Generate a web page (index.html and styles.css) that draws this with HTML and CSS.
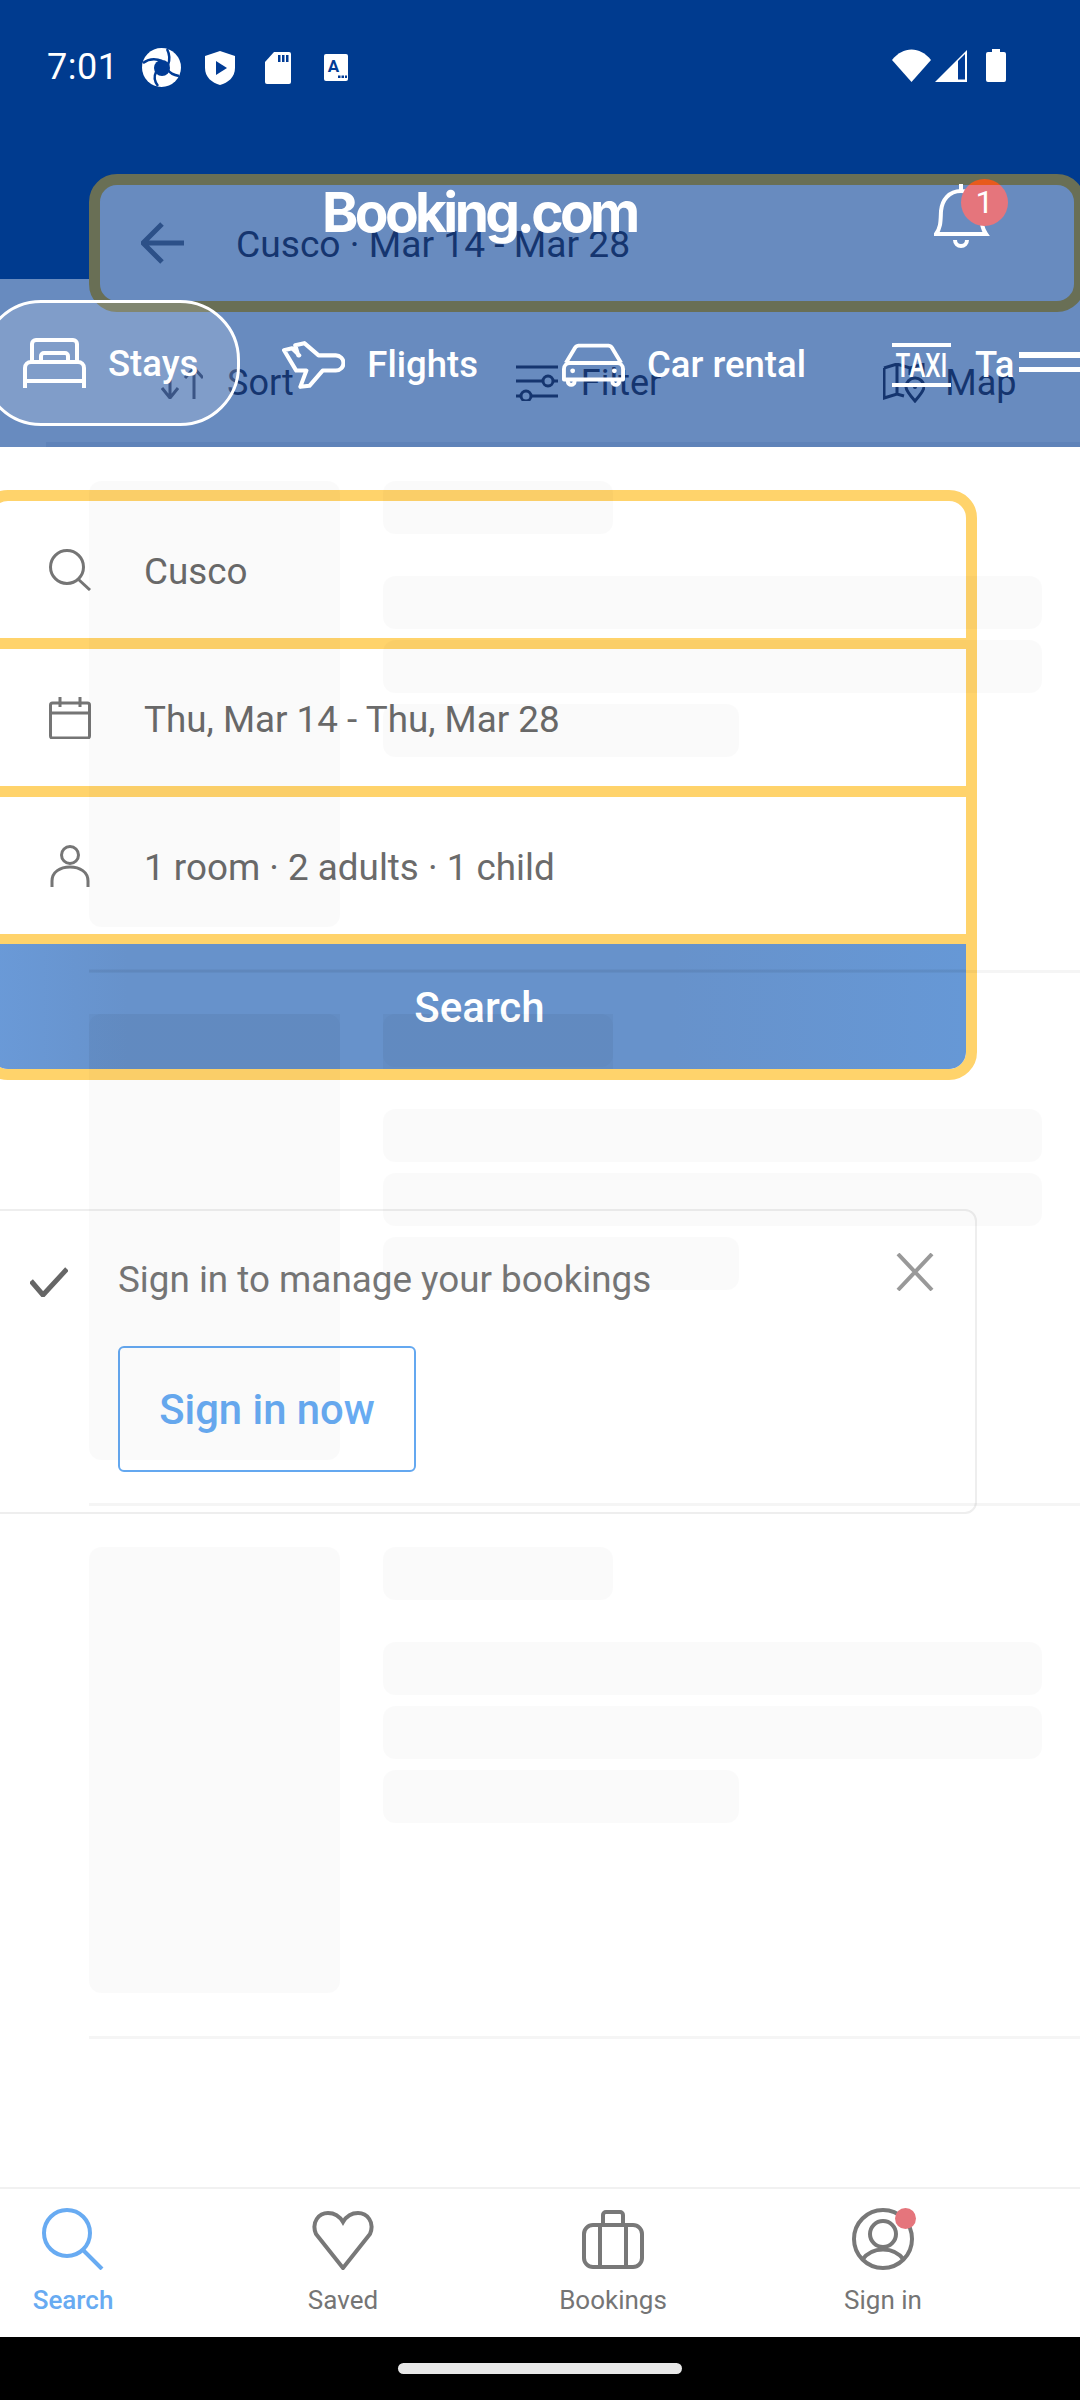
FILE: index.html
```html
<!DOCTYPE html>
<html lang="en">
<head>
<meta charset="utf-8">
<title>Booking.com</title>
<link rel="stylesheet" href="styles.css">
</head>
<body>
<div class="page">
  <header class="status">
    <div class="status-left">
      <span class="time">7:01</span>
      <svg class="si si-swirl" viewBox="0 0 39 39"><circle cx="19.5" cy="19.5" r="19.5" fill="#fff"/><circle cx="20" cy="20" r="8" fill="#003b95"/><path d="M1 15C8 10 15 11 20 13M25 1C28 7 28 12 26 17M37 28C31 27 27 24 25 21M16 38C12 33 12 28 14 24" fill="none" stroke="#003b95" stroke-width="2.5"/></svg>
      <svg class="si si-shield" viewBox="0 0 30 34"><path d="M15 0L30 5V17C30 26 23 32 15 34C7 32 0 26 0 17V5Z" fill="#fff"/><path d="M11 10L22 17L11 24Z" fill="#003b95"/></svg>
      <svg class="si si-sd" viewBox="0 0 26 32"><path d="M9 0H24a2 2 0 0 1 2 2V30a2 2 0 0 1-2 2H2a2 2 0 0 1-2-2V10Z" fill="#fff"/><path d="M13 3h2.500v7H13zM17 3h2.500v7H17zM21 3h2.500v7H21z" fill="#003b95"/></svg>
      <svg class="si si-a" viewBox="0 0 24 27"><rect width="24" height="27" rx="2" fill="#fff"/><text x="9.500" y="18" font-size="17" font-weight="700" text-anchor="middle" fill="#003b95" class="si-a-text">A</text><path d="M14 21.500h2.500V24H14zM17.500 21.500H20V24h-2.500zM21 21.500h2V24h-2z" fill="#003b95"/></svg>
    </div>
    <div class="status-right">
      <svg class="si si-wifi" viewBox="0 0 39 33"><path d="M0 11C11-3 28-3 39 11L19.500 33Z" fill="#fff"/></svg>
      <svg class="si si-signal" viewBox="0 0 32 32"><path d="M32 0V32H0Z" fill="#fff"/><path d="M23 11V29.500H30V4Z" fill="#003b95"/></svg>
      <svg class="si si-batt" viewBox="0 0 20 33"><path d="M6 0H14V3H18a2 2 0 0 1 2 2V31a2 2 0 0 1-2 2H2a2 2 0 0 1-2-2V5a2 2 0 0 1 2-2H6Z" fill="#fff"/></svg>
    </div>
  </header>

  <section class="toolbar">
    <div class="tool-row">
      <div class="tool">
        <svg class="tool-icon tool-sort" viewBox="0 0 42 32"><path d="M9 0V31M1 21L9 31L17 21M33 32V1M24 11L33 1L42 11"/></svg>
        <span>Sort</span>
      </div>
      <div class="tool">
        <svg class="tool-icon tool-filter" viewBox="0 0 42 36"><path d="M0 2H42M0 16H27M37 16H42M0 31H5M15 31H42"/><circle cx="32" cy="16" r="5"/><circle cx="10" cy="31" r="5"/></svg>
        <span>Filter</span>
      </div>
      <div class="tool">
        <svg class="tool-icon tool-map" viewBox="0 0 42 40"><path d="M1 5L14 1L27 5L40 1V14M14 1V31M1 5V35L14 31L21 33M27 5V12"/><path d="M32 38C25 30 23 27 23 24a9 9 0 0 1 18 0C41 27 39 30 32 38Z"/><circle cx="32" cy="24" r="2" class="map-dot"/></svg>
        <span>Map</span>
      </div>
    </div>
    <div class="toolbar-edge"></div>
  </section>

  <main class="list">
    <article class="card">
      <div class="thumb"></div>
      <div class="lines">
        <div class="bar bar-title"></div>
        <div class="bar bar-full bar-first"></div>
        <div class="bar bar-full"></div>
        <div class="bar bar-mid"></div>
      </div>
    </article>
    <article class="card">
      <div class="thumb"></div>
      <div class="lines">
        <div class="bar bar-title"></div>
        <div class="bar bar-full bar-first"></div>
        <div class="bar bar-full"></div>
        <div class="bar bar-mid"></div>
      </div>
    </article>
    <article class="card">
      <div class="thumb"></div>
      <div class="lines">
        <div class="bar bar-title"></div>
        <div class="bar bar-full bar-first"></div>
        <div class="bar bar-full"></div>
        <div class="bar bar-mid"></div>
      </div>
    </article>
  </main>

  <nav class="nav">
    <div class="nav-item nav-active">
      <svg class="nav-icon" viewBox="0 0 62 62"><circle cx="25" cy="25" r="23"/><path d="M41 42L60 61"/></svg>
      <span>Search</span>
    </div>
    <div class="nav-item">
      <svg class="nav-icon" viewBox="0 0 62 62"><path d="M31 60L4 26C-1 14 7 5 16 5C23 5 28 9 31 14C34 9 39 5 46 5C55 5 63 14 58 26Z"/></svg>
      <span>Saved</span>
    </div>
    <div class="nav-item">
      <svg class="nav-icon" viewBox="0 0 62 62"><rect x="2" y="17" width="58" height="42" rx="9"/><path d="M21 17V7a3 3 0 0 1 3-3H38a3 3 0 0 1 3 3V17M18 17V59M44 17V59"/></svg>
      <span>Bookings</span>
    </div>
    <div class="nav-item">
      <div class="nav-user">
        <svg class="nav-icon" viewBox="0 0 62 62"><circle cx="31" cy="31" r="29"/><circle cx="31" cy="26" r="13"/><path d="M10 52C20 38 42 38 52 52"/></svg>
        <span class="nav-dot"></span>
      </div>
      <span>Sign in</span>
    </div>
  </nav>
  <div class="home"><span class="home-bar"></span></div>

  <section class="headbox">
    <svg class="back" viewBox="0 0 43 42"><path d="M21 2L2 21L21 40M2 21H43"/></svg>
    <span class="head-title">Cusco · Mar 14 - Mar 28</span>
    <span class="logo">Booking.com</span>
    <svg class="bell" viewBox="0 0 56 66"><path d="M27 1V8M27 8C15 8 8 17 7 28C6.500 38 7 44 2 51H52C47 44 48 38 47 28C46 17 39 8 27 8ZM21 57a6 6 0 0 0 12 0"/></svg>
    <span class="badge">1</span>
  </section>

  <section class="tabs">
    <div class="tab tab-on">
      <svg class="tab-icon" viewBox="0 0 63 52"><path d="M9 24V6a4 4 0 0 1 4-4H50a4 4 0 0 1 4 4V24M18 24V18a3 3 0 0 1 3-3H42a3 3 0 0 1 3 3V24M2 50V30a6 6 0 0 1 6-6H55a6 6 0 0 1 6 6V50M2 43H61"/></svg>
      <span>Stays</span>
    </div>
    <div class="tab">
      <svg class="tab-icon" viewBox="0 0 62 47"><path d="M2 9L10 7L17 14H16L13 4L22 2L36 14H53a7.500 7.500 0 0 1 0 15H40L27 44L18 45L24 29H14Z"/></svg>
      <span>Flights</span>
    </div>
    <div class="tab">
      <svg class="tab-icon" viewBox="0 0 65 44"><path d="M4 20L13 5a5 5 0 0 1 4-3H48a5 5 0 0 1 4 3L61 20M2 26a6 6 0 0 1 6-6H57a6 6 0 0 1 6 6V37H2ZM6 37V39a3.500 3.500 0 0 0 7 0V37M52 37V39a3.500 3.500 0 0 0 7 0V37"/><circle cx="11" cy="28" r="2.500" class="tab-fill"/><circle cx="54" cy="28" r="2.500" class="tab-fill"/></svg>
      <span>Car rental</span>
    </div>
    <div class="tab tab-last">
      <svg class="tab-icon" viewBox="0 0 63 44"><path d="M2 2H61M2 42H61"/><text x="31.500" y="34" text-anchor="middle" textLength="52" lengthAdjust="spacingAndGlyphs" class="taxi-text">TAXI</text></svg>
      <span>Ta</span>
      <div class="tab-lines"></div>
    </div>
  </section>

  <form class="form">
    <div class="field">
      <svg class="field-icon" viewBox="0 0 42 42"><circle cx="18" cy="18" r="16.500"/><path d="M29 30L41 41"/></svg>
      <span class="field-label">Cusco</span>
    </div>
    <div class="field">
      <svg class="field-icon" viewBox="0 0 42 42"><rect x="1.500" y="6" width="39" height="35" rx="2"/><path d="M1.500 16H40.500M11 0V10M31 0V10"/></svg>
      <span class="field-label">Thu, Mar 14 - Thu, Mar 28</span>
    </div>
    <div class="field">
      <svg class="field-icon" viewBox="0 0 42 42"><circle cx="21" cy="10" r="8.500"/><path d="M3 42V36C3 27 11 22 21 22C31 22 39 27 39 36V42"/></svg>
      <span class="field-label">1 room · 2 adults · 1 child</span>
    </div>
    <div class="submit">Search</div>
  </form>

  <aside class="toast">
    <svg class="toast-check" viewBox="0 0 38 30"><path d="M1 14L13 28L37 2"/></svg>
    <div class="toast-body">
      <p class="toast-text">Sign in to manage your bookings</p>
      <div class="toast-btn">Sign in now</div>
    </div>
    <svg class="toast-close" viewBox="0 0 38 38"><path d="M2 1L36 37M36 1L2 37"/></svg>
  </aside>
</div>
</body>
</html>
```

FILE: styles.css
```css
* { box-sizing: border-box; }
html, body { margin: 0; padding: 0; background: #fff; }
body { font-family: Roboto, "Liberation Sans", sans-serif; }
.page {
  position: relative;
  display: flex;
  flex-direction: column;
  width: 1080px;
  height: 2400px;
  overflow: hidden;
  background: #fff;
}

/* status bar */
.status {
  flex: none;
  height: 279px;
  background: #003b8f;
  display: flex;
  justify-content: space-between;
  align-items: flex-start;
  padding: 48px 74px 0 47px;
}
.status-left, .status-right { display: flex; align-items: center; height: 39px; }
.time { color: #fff; font-size: 36px; line-height: 39px; width: 95px; letter-spacing: 0.5px; }
.si { display: block; flex: none; }
.si-swirl { width: 39px; height: 39px; }
.si-shield { width: 30px; height: 34px; margin-left: 24px; }
.si-sd { width: 26px; height: 32px; margin-left: 30px; }
.si-a { width: 24px; height: 27px; margin-left: 33px; }
.si-a-text { font-family: Roboto, sans-serif; }
.status-right { margin-top: -2px; }
.si-wifi { width: 39px; height: 33px; }
.si-signal { width: 32px; height: 32px; margin-left: 4px; }
.si-batt { width: 20px; height: 33px; margin-left: 19px; }

/* sort / filter / map */
.toolbar {
  flex: none;
  height: 168px;
  background: #688bbf;
  display: flex;
  flex-direction: column;
  justify-content: space-between;
}
.tool-row { display: flex; gap: 222px; padding: 84px 0 0 161px; }
.tool { display: flex; align-items: center; gap: 24px; color: #15356f; font-size: 36px; line-height: 40px; }
.tool-icon { display: block; flex: none; fill: none; stroke: #15356f; stroke-width: 3; }
.tool-sort { width: 42px; height: 32px; }
.tool-filter { width: 42px; height: 36px; margin-right: -1px; }
.tool-map { width: 42px; height: 40px; margin-right: -4px; }
.map-dot { fill: #15356f; stroke: none; }
.toolbar-edge { height: 5px; margin-left: 46px; background: #5f83b9; }

/* skeleton list */
.list {
  position: relative;
  z-index: 5;
  flex: 1;
  padding: 34px 0 0 89px;
  pointer-events: none;
}
.card {
  display: flex;
  gap: 43px;
  height: 492px;
  margin-bottom: 41px;
  padding-bottom: 43px;
  border-bottom: 3px solid rgba(0, 0, 0, 0.04);
}
.thumb { width: 251px; height: 446px; border-radius: 12px; background: rgba(0, 0, 0, 0.02); flex: none; }
.lines { display: flex; flex-direction: column; gap: 11px; }
.bar { height: 53px; border-radius: 12px; background: rgba(0, 0, 0, 0.02); }
.bar-title { width: 230px; }
.bar-first { margin-top: 31px; }
.bar-full { width: 659px; }
.bar-mid { width: 356px; }

/* bottom navigation */
.nav {
  flex: none;
  position: relative;
  z-index: 6;
  height: 150px;
  background: #fff;
  border-top: 2px solid #f1f1f1;
  display: flex;
  margin-left: -62px;
  width: 1142px;
  padding-top: 19px;
}
.nav-item {
  width: 270px;
  display: flex;
  flex-direction: column;
  align-items: center;
  gap: 15px;
  color: #757575;
  font-size: 26px;
  line-height: 30px;
}
.nav-icon { display: block; width: 62px; height: 62px; fill: none; stroke: #787878; stroke-width: 4; }
.nav-active { color: #68abf2; font-weight: 500; }
.nav-active .nav-icon { stroke: #68abf2; }
.nav-user { position: relative; width: 62px; height: 62px; }
.nav-dot {
  position: absolute;
  top: 0;
  left: 43px;
  width: 21px;
  height: 21px;
  border-radius: 50%;
  background: #e5757c;
}
.home {
  flex: none;
  position: relative;
  z-index: 6;
  height: 63px;
  background: #000;
  display: flex;
  justify-content: center;
  padding-top: 26px;
}
.home-bar { width: 284px; height: 11px; border-radius: 6px; background: #e8e8e8; }

/* header overlay */
.headbox {
  position: absolute;
  z-index: 1;
  left: 89px;
  top: 174px;
  width: 996px;
  height: 138px;
  border: 11px solid #696f55;
  border-radius: 28px;
  background: #688bbf;
  display: flex;
  align-items: center;
  padding: 0 0 0 41px;
}
.back { display: block; flex: none; width: 43px; height: 42px; fill: none; stroke: #2c5088; stroke-width: 5; }
.head-title { margin: 2px 0 0 52px; color: #15356f; font-size: 37.2px; line-height: 44px; white-space: nowrap; }
.logo {
  position: absolute;
  left: 222px;
  top: -5px;
  color: #fff;
  font-family: Inter, sans-serif;
  font-size: 55px;
  font-weight: 700;
  letter-spacing: -3.6px;
  line-height: 64px;
  white-space: nowrap;
}
.bell {
  position: absolute;
  left: 834px;
  top: -2px;
  width: 56px;
  height: 66px;
  fill: none;
  stroke: #fff;
  stroke-width: 4;
}
.badge {
  position: absolute;
  left: 861px;
  top: -6px;
  width: 47px;
  height: 47px;
  border-radius: 50%;
  background: linear-gradient(#e85a1c 6px, #e5757c 6px);
  color: #fff;
  font-size: 32px;
  line-height: 47px;
  text-align: center;
}

/* tabs overlay */
.tabs {
  position: absolute;
  z-index: 2;
  left: -19px;
  top: 300px;
  display: flex;
  height: 126px;
  white-space: nowrap;
}
.tab {
  display: flex;
  align-items: center;
  gap: 22px;
  padding: 3px 42px 0;
  color: #fff;
  font-size: 36.5px;
  font-weight: 500;
  line-height: 40px;
}
.tab-on {
  border: 3px solid #fff;
  border-radius: 60px;
  background: rgba(255, 255, 255, 0.16);
  padding: 2px 39px 0;
}
.tab-icon { display: block; flex: none; width: 63px; height: 52px; fill: none; stroke: #fff; stroke-width: 4; stroke-linejoin: round; }
.tab-fill { fill: #fff; stroke: none; }
.taxi-text { font-family: Roboto, sans-serif; font-size: 33px; font-weight: 500; fill: #fff; stroke: none; }
.tab-last { padding-right: 0; }
.tab-lines {
  flex: none;
  width: 80px;
  height: 20px;
  margin-left: -18px;
  margin-top: -6px;
  border-top: 6px solid #fff;
  border-bottom: 5px solid #fff;
}

/* search form overlay */
.form {
  position: absolute;
  z-index: 1;
  left: -20px;
  top: 490px;
  width: 997px;
  height: 590px;
  border: 11px solid #ffd36b;
  border-radius: 28px;
  background: #fff;
  display: flex;
  flex-direction: column;
  overflow: hidden;
}
.field {
  flex: none;
  height: 148px;
  border-bottom: 11px solid #ffd36b;
  display: flex;
  align-items: center;
  gap: 53px;
  padding-left: 58px;
  color: #6b6b6b;
  font-size: 36.8px;
}
.field-label { margin-top: 3px; }
.field:nth-child(3) { height: 147px; border-bottom-width: 10px; }
.field-icon { display: block; flex: none; width: 42px; height: 42px; fill: none; stroke: #757575; stroke-width: 3; }
.submit {
  height: 125px;
  border-radius: 0 0 15px 15px;
  background-color: #6792cb;
  background-image:
    linear-gradient(rgba(0,0,0,.035), rgba(0,0,0,.035)),
    linear-gradient(rgba(0,0,0,.035), rgba(0,0,0,.035)),
    linear-gradient(rgba(0,0,0,.035), rgba(0,0,0,.035)),
    linear-gradient(90deg, #6a9ad8, #6792cb 14%, #6792cb 70%, #6698d6);
  background-size: 991px 3px, 251px 55px, 230px 55px, 100% 100%;
  background-position: 98px 25px, 98px 70px, 392px 70px, 0 0;
  background-repeat: no-repeat;
  color: #fff;
  font-size: 42px;
  font-weight: 500;
  line-height: 127px;
  text-align: center;
  padding-left: 2px;
}

/* sign-in toast overlay */
.toast {
  position: absolute;
  z-index: 3;
  left: -20px;
  top: 1209px;
  width: 997px;
  height: 305px;
  border: 2px solid #eeeeee;
  border-radius: 12px;
  display: flex;
  color: #777;
}
.toast-check { display: block; flex: none; width: 38px; height: 30px; margin: 56px 0 0 48px; fill: none; stroke: #666; stroke-width: 5; }
.toast-body { margin-left: 50px; padding-top: 47px; flex: 1; }
.toast-text { margin: 0; font-size: 36.8px; line-height: 44px; white-space: nowrap; }
.toast-btn {
  margin-top: 44px;
  width: 298px;
  height: 126px;
  border: 2px solid #64a8f0;
  border-radius: 6px;
  color: #68abf2;
  font-size: 41.8px;
  font-weight: 500;
  line-height: 124px;
  text-align: center;
}
.toast-close { display: block; flex: none; width: 38px; height: 38px; margin: 42px 41px 0 0; fill: none; stroke: #999; stroke-width: 4; }
```
